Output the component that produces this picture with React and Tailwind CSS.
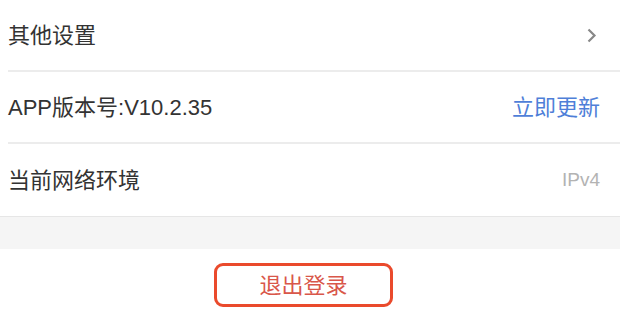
import { ChevronRight } from 'lucide-react';

const font = { fontFamily: '"Liberation Sans", "Noto Sans CJK SC", sans-serif' };

const Row = ({ label, children, last }) => (
    <div className="pl-2">
        <div className={`h-[72px] flex items-center justify-between pr-5 ${last ? '' : 'border-b-2 border-[#ececec]'}`}>
            <span className="text-[22px] text-[#333333]">{label}</span>
            {children}
        </div>
    </div>
);

const App = () => {
    return (
        <div className="w-[620px] h-[320px] bg-white overflow-hidden" style={font}>
            <Row label="其他设置">
                <svg width="10" height="15" viewBox="0 0 10 15" className="mr-[3px]">
                    <path d="M1.5 1.5 L7.5 7.5 L1.5 13.5" fill="none" stroke="#888888" strokeWidth="2.2" />
                </svg>
            </Row>
            <Row label="APP版本号:V10.2.35">
                <span className="text-[22px] text-[#4f7fd8]">立即更新</span>
            </Row>
            <Row label="当前网络环境" last>
                <span className="text-[19px] text-[#b3b3b3]">IPv4</span>
            </Row>

            {/* Section gap */}
            <div className="h-[33px] bg-[#f5f5f5] border-t border-[#e6e6e6]" />

            {/* Logout */}
            <div className="flex justify-center pt-[14px]">
                <button className="w-[179px] h-[44px] ml-[-13px] border-[3px] border-[#ea4a2c] rounded-[9px] text-[22px] text-[#d9574a]">
                    退出登录
                </button>
            </div>
        </div>
    );
};

export default App;
